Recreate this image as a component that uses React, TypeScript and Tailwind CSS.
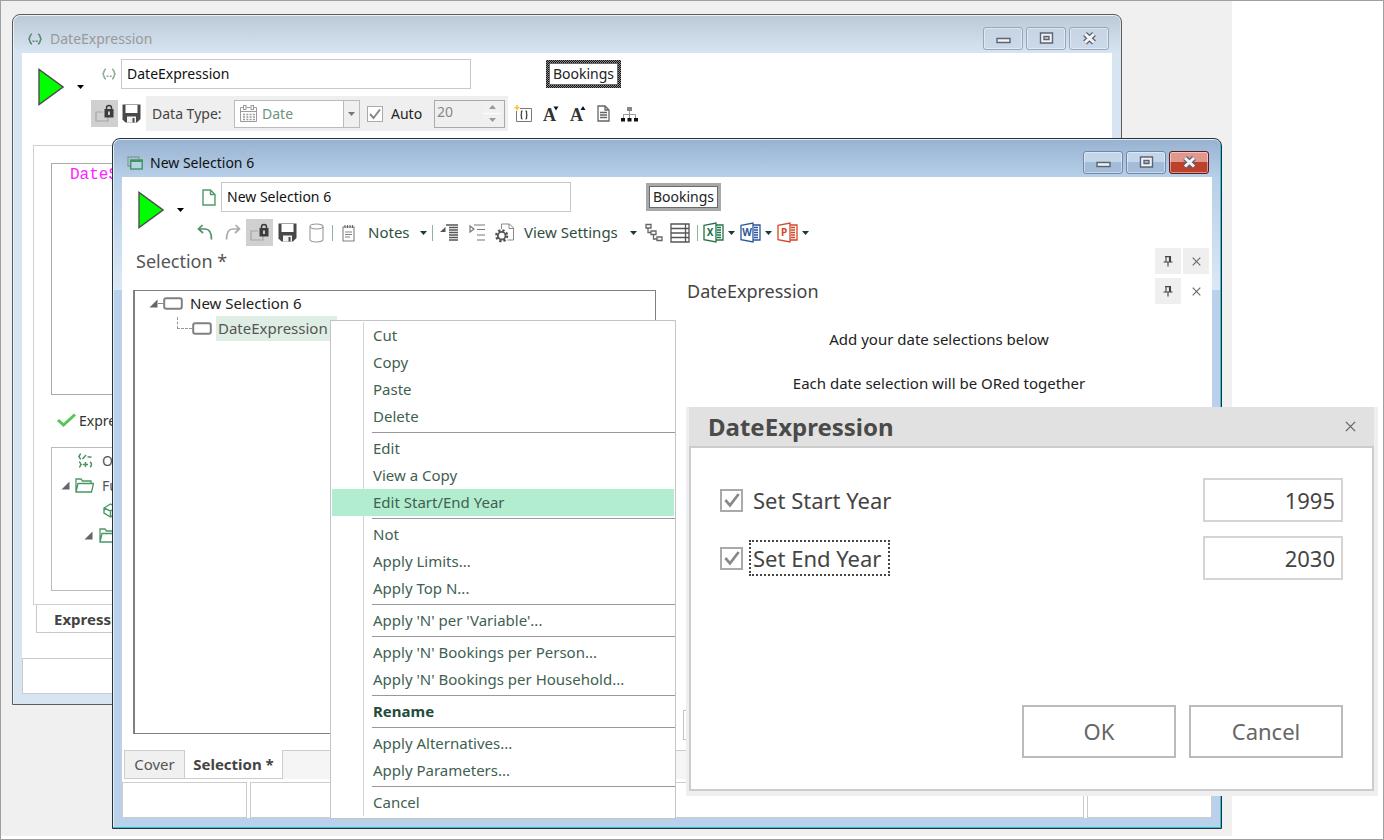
import type { ReactNode } from "react";
import clsx from "clsx";

/* ---------- small icons ---------- */

const Caret = ({ className = "text-[#1d3b2c]" }: { className?: string }) => (
  <svg width="7" height="4" viewBox="0 0 7 4" className={clsx("shrink-0", className)}>
    <path d="M0 0h7L3.5 4z" fill="currentColor" />
  </svg>
);

const PlayIcon = () => (
  <svg width="26" height="38" viewBox="0 0 26 38">
    <path d="M1 1.5v35L25 19z" fill="#00ff00" stroke="#4d4d4d" strokeWidth="1.4" />
  </svg>
);

const BracesIcon = ({ className }: { className: string }) => (
  <svg width="14" height="12" viewBox="0 0 14 12" fill="none" stroke="currentColor" strokeWidth="1.6" className={className}>
    <path d="M4 1C1.500 1.500 2.500 4 1 6c1.500 2 .5 4.500 3 5M10 1c2.500.5 1.500 3 3 5-1.500 2-.5 4.500-3 5" />
    <path d="M4.500 8.300h2M7.700 8.300h2" />
  </svg>
);

const WindowsIcon = () => (
  <svg width="16" height="14" viewBox="0 0 16 14" fill="none">
    <path d="M3 10H1V1h11v2" stroke="#8a9a94" strokeWidth="1.300" />
    <rect x="3.700" y="4" width="11.500" height="9" fill="#b9d3e6" stroke="#3f9560" strokeWidth="1.400" />
    <path d="M3.500 5h12" stroke="#3f9560" strokeWidth="2" />
  </svg>
);

const FileIcon = () => (
  <svg width="14" height="17" viewBox="0 0 14 17" fill="none" stroke="#4f9c69" strokeWidth="1.400">
    <path d="M1 1h7.500l4.500 4.500V16H1zM8.500 1v4.500H13" />
  </svg>
);

const LockBox = () => (
  <button type="button" aria-label="Lock" className="grid size-[27px] place-items-center bg-[#d0d0d0]">
    <svg width="19" height="19" viewBox="0 0 19 19" fill="none">
      <path d="M8 8H1v9h12v-4" stroke="#a5a5a5" strokeWidth="1.200" />
      <rect x="9.500" y="5" width="9" height="8.500" fill="#3c3c3c" />
      <path d="M11.500 5.500V4a2.500 2.500 0 0 1 5 0v1.500" stroke="#3c3c3c" strokeWidth="1.500" />
      <path d="M14 7.500v3.500" stroke="#d8d8d8" strokeWidth="1.800" />
    </svg>
  </button>
);

const SaveIcon = () => (
  <svg width="19" height="19" viewBox="0 0 19 19">
    <path d="M.5.5h18v14.500l-3.500 3.500H3.500l-3-3z" fill="#484848" />
    <path d="M3.500 1h12v8h-12z" fill="#fff" />
    <path d="M5 12.500h9v6H5z" fill="#f2f2f2" />
    <path d="M10.500 14h2v4.500h-2z" fill="#484848" />
  </svg>
);

const CalendarIcon = () => (
  <svg width="19" height="18" viewBox="0 0 19 18" fill="none" stroke="#9b9b9b">
    <path d="M4 2.500H1.500v14h16v-14H15M7.500 2.500h4M1.500 6.500h16" />
    <rect x="4.500" y=".5" width="2.500" height="4" />
    <rect x="12" y=".5" width="2.500" height="4" />
    <path d="M4 9.500h12M4 12h12M4 14.500h12" strokeWidth="1.500" strokeDasharray="2 1.300" />
  </svg>
);

const UndoIcon = ({ className }: { className?: string }) => (
  <svg width="16" height="17" viewBox="0 0 16 17" fill="none" stroke="currentColor" strokeWidth="1.700" className={className}>
    <path d="M5.500 1 1.500 5l4.500 4M1.500 5H8c4 0 6.500 3 6.500 10.500" />
  </svg>
);

const CylinderIcon = () => (
  <svg width="15" height="20" viewBox="0 0 15 20" fill="none" stroke="#999" strokeWidth="1.100">
    <ellipse cx="7.500" cy="3.500" rx="6.500" ry="2.500" />
    <path d="M1 3.500v13c0 3.300 13 3.300 13 0v-13" />
  </svg>
);

const NotesIcon = () => (
  <svg width="13" height="18" viewBox="0 0 13 18" fill="none" stroke="#808080" strokeWidth="1.100">
    <path d="M1 3h11v14H1zM3 8h7M3 10.500h7M3 13h5" />
    <path d="M3 1v3M5.500 1v3M8 1v3M10.500 1v3" stroke="#666" />
  </svg>
);

const CollapseIcon = () => (
  <svg width="19" height="17" viewBox="0 0 19 17" fill="none" stroke="#555" strokeWidth="1.300">
    <path d="M0 8 5.500 3v5z" fill="#555" stroke="none" />
    <path d="M6 1h12M9 3.500h9M9 6h9M9 8.500h9M9 11h9M9 13.500h9M9 16h9" />
  </svg>
);

const ExpandIcon = () => (
  <svg width="16" height="17" viewBox="0 0 16 17" fill="none" stroke="#777" strokeWidth="1.200">
    <path d="M1 2v6l4-3z" />
    <path d="M5 1h11M8 5.500h8M8 11h8M8 16h8" />
  </svg>
);

const GearPageIcon = () => (
  <svg width="19" height="20" viewBox="0 0 19 20" fill="none" stroke="#888">
    <path d="M6.500 6V1h8l4 4v12h-6M14 1v4.500h4.500" />
    <circle cx="6.700" cy="12.700" r="5.300" stroke="#555" strokeWidth="2.600" strokeDasharray="2.200 1.960" />
    <circle cx="6.700" cy="12.700" r="3.800" stroke="#555" strokeWidth="1.800" fill="#fff" />
  </svg>
);

const NodesIcon = () => (
  <svg width="18" height="19" viewBox="0 0 18 19" fill="none" stroke="#666" strokeWidth="1.300">
    <path d="M1 1.500h5v3.500H1zM6 8h5v3.500H6zM12 14h5v3.500h-5zM3 5v4.500h3M8.500 11.500v4.500H12" />
  </svg>
);

const GridIcon = () => (
  <svg width="20" height="20" viewBox="0 0 20 20" fill="none" stroke="#555" strokeWidth="1.300">
    <path d="M1 1h18v18H1zM1 5.500h18M1 10h18M1 14.500h18M15.500 1v18" />
  </svg>
);

const OfficeIcon = ({ letter, color }: { letter: string; color: string }) => (
  <svg width="21" height="21" viewBox="0 0 21 21" fill="none" stroke={color} strokeWidth="1.300">
    <path d="M1 3.300 13 1v19L1 17.700zM13 3h7v15h-7" fill="#fff" />
    <path d="M14 5.500h4M14 8h4M14 10.500h4M14 13h4M14 15.500h4" />
    <text x="7" y="14" textAnchor="middle" fontSize="10" fontWeight="700" stroke="none" fill={color}>
      {letter}
    </text>
  </svg>
);

const NewBracesIcon = () => (
  <svg width="18" height="18" viewBox="0 0 18 18" fill="none" stroke="#777">
    <path d="M6 3.500h11.500v13h-15V6" />
    <path d="M8.500 6C7 6 7.500 7 7.500 8.500s-.5 1.500-1 1.500c.5 0 1 0 1 1.500S7 14 8.500 14M11.500 6c1.500 0 1 1 1 2.500s.5 1.500 1 1.500c-.5 0-1 0-1 1.500s.5 2.500-1 2.500" stroke="#444" strokeWidth="1.300" />
    <path d="M3 0v5.500M.5 2.700h5" stroke="#f6c62f" strokeWidth="1.600" />
  </svg>
);

const FontSizeIcon = ({ up }: { up?: boolean }) => (
  <svg width="16" height="24" viewBox="0 0 16 24" fill="#333" className="overflow-visible">
    <text x="0" y="19" fontSize="18" fontWeight="700" fontFamily="Liberation Serif, serif">
      A
    </text>
    <path d={up ? "M10.500 8h5L13 4z" : "M10.500 4.500h5l-2.500 4z"} fill="#111" />
  </svg>
);

const PageIcon = () => (
  <svg width="13" height="17" viewBox="0 0 13 17" fill="none" stroke="#666" strokeWidth="1.300">
    <path d="M1 1h7l4 4v11H1zM8 1v4h4M3 7.500h7M3 10h7M3 12.500h7" />
  </svg>
);

const SitemapIcon = () => (
  <svg width="17" height="16" viewBox="0 0 17 16">
    <path d="M6 1h5v4H6z" fill="#888" />
    <path d="M8.500 5v7M2.500 12V8.500h12V12" fill="none" stroke="#999" />
    <path d="M0 12h4v3.500H0zM6.500 12h4v3.500h-4zM13 12h4v3.500h-4z" fill="#111" />
  </svg>
);

const FolderIcon = () => (
  <svg width="19" height="15" viewBox="0 0 19 15" fill="none" stroke="#4a9663" strokeWidth="1.300">
    <path d="M1 14V1h5l1.500 2H16v2.500M1 14 3 5.500h15.500L16.500 14z" />
  </svg>
);

const OperatorsIcon = () => (
  <svg width="15" height="15" viewBox="0 0 15 15" fill="none" stroke="#4a9663" strokeWidth="1.500">
    <path d="M3 1C1 1 2 3 1 3.500 2 4 1 6 3 6M4.500 6 8 2M9.500 4h4M1 9c2 0 1 2 2 2.500C2 12 3 14 1 14M5 11.500h5M7.500 9v5M12 9c2 1 2 4 0 5" />
  </svg>
);

const CubeIcon = () => (
  <svg width="15" height="15" viewBox="0 0 15 15" fill="none" stroke="#4a9663" strokeWidth="1.400">
    <path d="M1 5 7.500 1 14 5v5l-6.500 4L1 10zM1 5l6.500 3L14 5M7.500 8v6" />
  </svg>
);

const Expander = () => (
  <svg width="9" height="9" viewBox="0 0 9 9" className="shrink-0">
    <path d="M8.500.5v8h-8z" fill="#666" />
  </svg>
);

const NodeShape = () => (
  <svg width="20" height="13" viewBox="0 0 20 13" className="shrink-0">
    <rect x="1.200" y="1.200" width="17.600" height="10.600" rx="2" fill="#fff" stroke="#808080" strokeWidth="2" />
  </svg>
);

const PinIcon = () => (
  <svg width="10" height="11" viewBox="0 0 10 11" fill="none" stroke="#444" strokeWidth="1.100">
    <path d="M2 .6h6M3 .5V6M6.500.5V6M7.500.5V6M.5 6h9M5 6v4.500" />
  </svg>
);

const CrossIcon = ({ size = 9 }: { size?: number }) => (
  <svg width={size} height={size} viewBox="0 0 9 9" fill="none" stroke="#666" strokeWidth="1.100">
    <path d="m.7.7 7.600 7.600M8.300.7.700 8.300" />
  </svg>
);

const Divider = () => <span className="block h-4 w-px bg-[#8fb39c]" />;

/* ---------- shared pieces ---------- */

type WindowProps = { title: string; icon: ReactNode; active?: boolean; className: string; children: ReactNode };

const captionButtons = [
  { name: "Minimize", glyph: <path d="M2 6.500h13v4H2z" /> },
  { name: "Maximize", glyph: <path fillRule="evenodd" d="M2.500 1h12v10h-12zM6 4.500h5v3H6z" /> },
  {
    name: "Close",
    glyph: (
      <>
        <path d="m4 2 9 8.500M13 2l-9 8.500" strokeWidth="5.500" />
        <path d="m4 2 9 8.500M13 2l-9 8.500" stroke="#f4f4f4" strokeWidth="3" />
      </>
    ),
  },
];

function AppWindow({ title, icon, active, className, children }: WindowProps) {
  return (
    <section
      className={clsx(
        "absolute flex h-[691px] w-[1110px] flex-col rounded-t-lg border px-[9px] pb-[10px]",
        active
          ? "border-[#26313a] bg-[linear-gradient(to_bottom,#b7cfe9_38px,#dbe8f5_151px,#b9d1ea_151px)] shadow-[inset_-1px_-1px_0_#2fc1dc,inset_1px_1px_0_#e4eef8]"
          : "border-[#5c5c5c] bg-[#d7e4f2] shadow-[inset_1px_1px_0_#e9f1f9]",
        className,
      )}
    >
      <header
        className={clsx(
          "-mx-2 mt-px flex h-[37px] shrink-0 items-center rounded-t-md bg-linear-to-b pt-2 pr-[11px] pl-[13px]",
          active ? "from-[#98b3d1] to-[#b7cfe9]" : "from-[#bccad7] to-[#d7e4f2]",
        )}
      >
        <span className="grid w-4 place-items-center">{icon}</span>
        <h2 className={clsx("ml-[7px] text-[14px]", active ? "text-[#111]" : "text-[#999]")}>{title}</h2>
        <div className="ml-auto flex gap-[3px]">
          {captionButtons.map(({ name, glyph }) => (
            <button
              key={name}
              type="button"
              aria-label={name}
              className={clsx(
                "grid h-[23px] w-10 place-items-center rounded-[3px] border bg-linear-to-b shadow-[inset_0_0_0_1px_#ffffff70]",
                !active && "border-[#97a6ba] from-[#c7d4e3] to-[#ccd9e8]",
                active && name !== "Close" && "border-[#7189a6] from-[#c3d6ea] from-50% to-[#a3bdd9] to-50%",
                active && name === "Close" && "border-[#5b1d22] from-[#e0988d] from-50% to-[#bb412a] to-50%",
              )}
            >
              <svg width="17" height="13" viewBox="0 0 17 13" fill="#f4f4f4" stroke="#5b6475" strokeWidth="1.400">
                {glyph}
              </svg>
            </button>
          ))}
        </div>
      </header>
      <div className="flex min-h-0 flex-1 flex-col bg-white">{children}</div>
    </section>
  );
}

type NameRowProps = { icon: ReactNode; name: string; focused?: boolean };

function NameRow({ icon, name, focused }: NameRowProps) {
  return (
    <div className="flex h-[30px] items-center">
      <span className="flex w-8 justify-end pr-[5px]">{icon}</span>
      <input aria-label="Name" defaultValue={name} className="h-[30px] w-[350px] border border-[#c8c8c8] px-[5px] pb-[2px] text-[14px] text-[#111]" />
      <button
        type="button"
        className={clsx(
          "ml-[75px] h-7 w-[75px] p-[3px] text-[14px] text-[#222]",
          focused ? "bg-[repeating-conic-gradient(#111_0_25%,#8a8a8a_0_50%)] bg-[length:2px_2px]" : "bg-[#a9a9a9]",
        )}
      >
        <span className="block h-full border border-[#6b6b6b] bg-white leading-5">Bookings</span>
      </button>
    </div>
  );
}

function RunButton() {
  return (
    <div className="flex h-[38px] items-center">
      <button type="button" aria-label="Run">
        <PlayIcon />
      </button>
      <button type="button" aria-label="Run options" className="ml-[13px]">
        <Caret className="text-black" />
      </button>
    </div>
  );
}

function Tick({ id, label, big }: { id: string; label: string; big?: boolean }) {
  return (
    <span className="grid place-items-center">
      <input
        id={id}
        type="checkbox"
        aria-label={label}
        defaultChecked
        className={clsx("col-start-1 row-start-1 appearance-none border-[#aaa] bg-white", big ? "size-[23px] border-2" : "size-4 border")}
      />
      <svg
        viewBox="0 0 12 12"
        className={clsx("pointer-events-none col-start-1 row-start-1", big ? "size-4" : "size-3")}
        fill="none"
        stroke="#888"
        strokeWidth="2"
      >
        <path d="m1 6 3.500 4L11 1.500" />
      </svg>
    </span>
  );
}

/* ---------- expression window ---------- */

function ExpressionWindow() {
  return (
    <AppWindow title="DateExpression" icon={<BracesIcon className="text-[#5d8a72]" />} className="top-[13px] left-[11px]">
      <div className="flex h-20 pt-[6px] pl-4">
        <div className="pt-[9px]">
          <RunButton />
        </div>
        <div className="ml-[5px]">
          <NameRow icon={<BracesIcon className="text-[#8fae9c]" />} name="DateExpression" focused />
          <div className="mt-[7px] ml-[2px] flex h-[35px] items-center">
            <LockBox />
            <button type="button" aria-label="Save" className="ml-1">
              <SaveIcon />
            </button>
            <div className="ml-[5px] flex h-[35px] w-[362px] items-center bg-[#efefef] pl-[6px] text-[14px] text-[#444]">
              <label htmlFor="datatype" className="w-[82px]">
                Data Type:
              </label>
              <div className="flex h-7 w-[126px] items-center border border-[#bbb] bg-white pl-1">
                <CalendarIcon />
                <select id="datatype" className="ml-1 flex-1 appearance-none text-[#6d9480]">
                  <option>Date</option>
                </select>
                <span className="grid h-[26px] w-4 place-items-center border-l border-[#bbb] bg-[#efefef]">
                  <Caret className="text-[#777]" />
                </span>
              </div>
              <span className="ml-[7px]">
                <Tick id="auto" label="Auto" />
              </span>
              <label htmlFor="auto" className="ml-2 w-[43px] text-[#222]">
                Auto
              </label>
              <div className="flex h-7 w-[71px] items-center border border-[#aaa] pl-[2px]">
                <input aria-label="Length" defaultValue="20" className="h-6 w-[46px] pb-1 text-[#888]" />
                <span className="flex flex-col gap-[1px] bg-white">
                  <button type="button" aria-label="Increase" className="grid h-3 w-[18px] place-items-center bg-[#f0f0f0]">
                    <Caret className="rotate-180 text-[#999]" />
                  </button>
                  <button type="button" aria-label="Decrease" className="grid h-3 w-[18px] place-items-center bg-[#f0f0f0]">
                    <Caret className="text-[#999]" />
                  </button>
                </span>
              </div>
            </div>
            <div className="ml-[6px] flex items-center gap-[11px]">
              <NewBracesIcon />
              <FontSizeIcon />
              <FontSizeIcon up />
              <PageIcon />
              <SitemapIcon />
            </div>
          </div>
        </div>
      </div>

      <div className="mt-3 mr-3 ml-[11px] h-[460px] border border-[#d0d0d0] pt-[17px] pr-4 pl-[17px] text-[14px]">
        <div className="h-[232px] border border-[#aaa] pl-[18px] font-['Liberation_Mono',monospace] text-[16px] leading-[22px] text-[#ff22ff]">
          DateSerial
        </div>
        <p className="mt-[13px] flex h-6 items-center gap-[3px] pl-[6px] text-[#333]">
          <svg width="19" height="14" viewBox="0 0 19 14" fill="none" stroke="#58c558" strokeWidth="3">
            <path d="m1 7 5.500 5L18 1.500" />
          </svg>
          Expression OK
        </p>
        <ul className="mt-[15px] h-[144px] border border-[#bbb] text-[#555]">
          <li className="flex h-[25px] items-center pl-[26px]">
            <OperatorsIcon />
            <span className="ml-[9px]">Operators</span>
          </li>
          <li className="flex h-[25px] items-center pl-[9px]">
            <Expander />
            <span className="mr-2 ml-[5px]">
              <FolderIcon />
            </span>
            Functions
          </li>
          <li className="flex h-[25px] items-center pl-[51px]">
            <CubeIcon />
          </li>
          <li className="flex h-[25px] items-center pl-8">
            <Expander />
            <span className="ml-[6px]">
              <FolderIcon />
            </span>
          </li>
        </ul>
      </div>
      <div className="ml-[14px] h-7 w-40 border border-t-0 border-[#c8c8c8] pl-[17px] text-[15px] leading-7 font-bold text-[#444]">Expression</div>
      <div className="mt-auto h-9 border border-[#ccc]" />
    </AppWindow>
  );
}

/* ---------- selection window ---------- */

const officeApps = [
  { letter: "X", color: "#217346", name: "Excel" },
  { letter: "W", color: "#2b579a", name: "Word" },
  { letter: "P", color: "#d24726", name: "PowerPoint" },
];

function PaneButtons({ plainClose }: { plainClose?: boolean }) {
  return (
    <div className="flex gap-[2px]">
      <button type="button" aria-label="Pin pane" className="grid size-[26px] place-items-center bg-[#efefef]">
        <PinIcon />
      </button>
      <button type="button" aria-label="Close pane" className={clsx("grid size-[26px] place-items-center", !plainClose && "bg-[#efefef]")}>
        <CrossIcon />
      </button>
    </div>
  );
}

function SelectionToolbar() {
  return (
    <div className="flex h-[71px] shrink-0 pt-[5px] pl-4">
      <div className="pt-[9px]">
        <RunButton />
      </div>
      <div className="ml-[5px]">
        <NameRow icon={<FileIcon />} name="New Selection 6" />
        <div className="mt-[7px] ml-2 flex h-[27px] items-center text-[15px] text-[#2f4f43]">
          <UndoIcon className="text-[#4f9468]" />
          <UndoIcon className="ml-3 -scale-x-100 text-[#aaa]" />
          <span className="ml-[5px]">
            <LockBox />
          </span>
          <button type="button" aria-label="Save" className="mr-3 ml-[5px]">
            <SaveIcon />
          </button>
          <CylinderIcon />
          <span className="mr-[9px] ml-2">
            <Divider />
          </span>
          <NotesIcon />
          <button type="button" className="ml-[13px] flex w-[59px] items-center justify-between">
            Notes <Caret />
          </button>
          <span className="mr-[7px] ml-[5px]">
            <Divider />
          </span>
          <CollapseIcon />
          <span className="mr-[10px] ml-[10px]">
            <ExpandIcon />
          </span>
          <GearPageIcon />
          <button type="button" className="mr-2 ml-[10px] flex w-[113px] items-center justify-between whitespace-nowrap">
            View Settings <Caret />
          </button>
          <NodesIcon />
          <span className="mr-[7px] ml-[7px]">
            <GridIcon />
          </span>
          <Divider />
          <div className="ml-[5px] flex gap-[5px]">
            {officeApps.map((app) => (
              <button key={app.name} type="button" aria-label={app.name} className="flex items-center gap-1">
                <OfficeIcon letter={app.letter} color={app.color} />
                <Caret />
              </button>
            ))}
          </div>
        </div>
      </div>
    </div>
  );
}

function SelectionWindow() {
  return (
    <AppWindow title="New Selection 6" icon={<WindowsIcon />} active className="top-[137px] left-[111px]">
      <SelectionToolbar />
      <div className="flex h-[30px] shrink-0 justify-between pr-[3px] pl-[14px]">
        <h3 className="text-[18px] leading-[26px] text-[#555]">Selection *</h3>
        <PaneButtons />
      </div>
      <div className="flex min-h-0 flex-1">
        <div className="mt-3 mb-4 ml-[11px] w-[523px] border border-l-2 border-[#808080] pl-[14px]">
          <div className="flex h-[25px] items-center text-[15px] text-[#222]">
            <Expander />
            <span className="w-[5px] border-t border-dashed border-[#888]" />
            <NodeShape />
            <span className="ml-[7px]">New Selection 6</span>
          </div>
          <div className="flex h-[25px] items-center pl-7 text-[15px] text-[#555]">
            <span className="-mt-3 h-3 w-[15px] border-b border-l border-dashed border-[#999]" />
            <NodeShape />
            <span className="ml-1 w-[121px] bg-[#deeee4] px-[2px] leading-[25px]">DateExpression</span>
          </div>
        </div>
        <div className="flex flex-1 flex-col pl-[27px]">
          <div className="flex justify-between pr-[3px] pl-1">
            <h3 className="text-[18px] leading-[26px] text-[#444]">DateExpression</h3>
            <PaneButtons plainClose />
          </div>
          <div className="mt-[23px] flex flex-col gap-5 pr-[17px] text-center text-[15px] leading-6 text-[#222]">
            <p>Add your date selections below</p>
            <p>Each date selection will be ORed together</p>
          </div>
          <div className="mt-auto mr-4 mb-[10px] h-[30px] border border-[#c4c4c4]" />
        </div>
      </div>
      <div className="flex h-[29px] shrink-0 text-[15px] text-[#555]">
        <button type="button" className="ml-[2px] w-[61px] border border-[#ccc] bg-[#f0f0f0]">
          Cover
        </button>
        <button type="button" className="w-[98px] border-r border-b border-[#ccc] font-bold text-[#444]">
          Selection *
        </button>
        <div className="flex-1 border-t border-[#ccc] bg-[#f5f5f5]" />
      </div>
      <div className="mt-[3px] flex h-9 shrink-0 gap-[3px]">
        <div className="w-[125px] border border-[#ccc]" />
        <div className="flex-1 border border-[#ccc]" />
        <div className="w-[125px] border border-[#ccc]" />
      </div>
    </AppWindow>
  );
}

/* ---------- context menu ---------- */

const menuGroups = [
  ["Cut", "Copy", "Paste", "Delete"],
  ["Edit", "View a Copy", "Edit Start/End Year"],
  ["Not", "Apply Limits...", "Apply Top N..."],
  ["Apply 'N' per 'Variable'..."],
  ["Apply 'N' Bookings per Person...", "Apply 'N' Bookings per Household..."],
  ["Rename"],
  ["Apply Alternatives...", "Apply Parameters..."],
  ["Cancel"],
];

function ContextMenu() {
  return (
    <div role="menu" className="absolute top-[319px] left-[329px] w-[346px] border border-[#c4c4c4] bg-white pt-px pb-[2px] text-[15px] text-[#3f5f52]">
      {menuGroups.map((group, i) => (
        <div key={group[0]}>
          {i > 0 && (
            <div className="ml-8 border-l border-[#d4d4d4] py-[2px] pl-2">
              <hr className="border-[#999]" />
            </div>
          )}
          {group.map((item) => {
            const selected = item === "Edit Start/End Year";
            return (
              <button
                key={item}
                type="button"
                role="menuitem"
                className={clsx("block h-[27px] w-full px-px text-left", item === "Rename" && "font-bold text-[#234b3c]")}
              >
                <span className={clsx("flex h-full items-center pl-[31px]", selected && "bg-[#b3edcf]")}>
                  <span className={clsx("flex h-full items-center border-l pl-[9px]", selected ? "border-transparent" : "border-[#d4d4d4]")}>{item}</span>
                </span>
              </button>
            );
          })}
        </div>
      ))}
    </div>
  );
}

/* ---------- year dialog ---------- */

const yearFields = [
  { id: "start", label: "Set Start Year", value: "1995" },
  { id: "end", label: "Set End Year", value: "2030" },
];

function YearDialog() {
  return (
    <div role="dialog" aria-label="DateExpression" className="absolute top-[406px] left-[685px] w-[692px] bg-[#efeff2] pr-1 pb-[5px] pl-[3px] text-[22px] text-[#444]">
      <header className="flex h-[39px] items-center justify-between bg-[#e1e1e1] pr-[18px] pl-[19px]">
        <h2 className="text-[24px] font-bold text-[#4a4a4a]">DateExpression</h2>
        <button type="button" aria-label="Close dialog">
          <CrossIcon size={11} />
        </button>
      </header>
      <div className="h-[345px] border-2 border-[#ccc] bg-white px-[29px] pt-[30px]">
        <div className="flex flex-col gap-[14px]">
          {yearFields.map((field) => (
            <div key={field.id} className="flex h-11 items-center">
              <Tick id={field.id} label={field.label} big />
              <label
                htmlFor={field.id}
                className={clsx("ml-[6px] border-2 pr-[7px] pl-[2px] leading-8", field.id === "end" ? "border-dotted border-[#444]" : "border-transparent")}
              >
                {field.label}
              </label>
              <input
                aria-label={`${field.label} value`}
                defaultValue={field.value}
                className="ml-auto h-11 w-[140px] border-2 border-[#d4d4d4] px-[6px] text-right"
              />
            </div>
          ))}
        </div>
        <div className="mt-[125px] flex justify-end gap-[13px] text-[#666]">
          {["OK", "Cancel"].map((text) => (
            <button key={text} type="button" className="h-[53px] w-[154px] border-2 border-[#bbb]">
              {text}
            </button>
          ))}
        </div>
      </div>
    </div>
  );
}

export default function App() {
  return (
    <main className="relative flex h-screen min-h-[840px] flex-col overflow-hidden border border-[#a0a0a0] bg-white pr-[151px] pb-[3px] font-['Noto_Sans',sans-serif]">
      <div className="flex-1 bg-[#f0f0f0]" />
      <ExpressionWindow />
      <SelectionWindow />
      <ContextMenu />
      <YearDialog />
    </main>
  );
}
